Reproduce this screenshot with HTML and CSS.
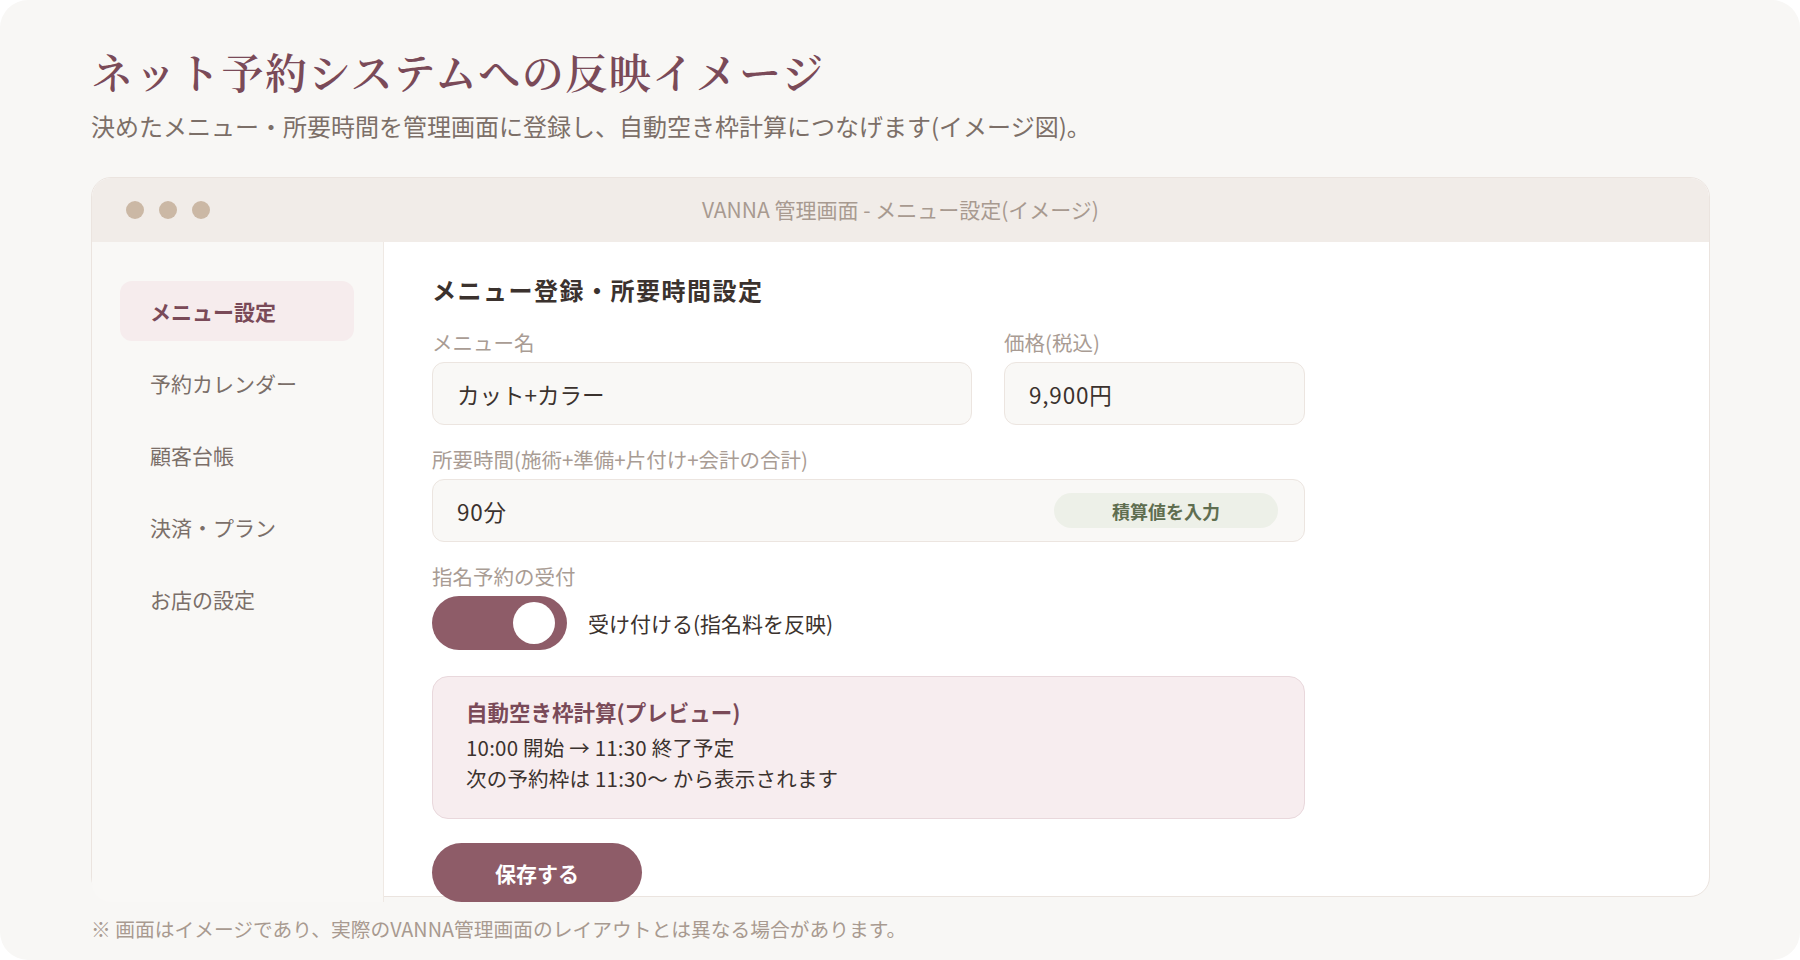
FILE: index.html
```html
<!DOCTYPE html>
<html lang="ja">
<head>
    <meta charset="UTF-8">
    <meta name="viewport" content="width=device-width, initial-scale=1.0">
    <title>ネット予約システムへの反映イメージ</title>
    <link rel="stylesheet" href="styles.css">
</head>
<body>
    <div class="page">
        <header class="intro">
            <h1>ネット予約システムへの反映イメージ</h1>
            <p>決めたメニュー・所要時間を管理画面に登録し、自動空き枠計算につなげます(イメージ図)。</p>
        </header>

        <div class="window">
            <div class="window-bar">
                <div class="dots">
                    <span></span><span></span><span></span>
                </div>
                <div class="window-title">VANNA 管理画面 - メニュー設定(イメージ)</div>
            </div>
            <div class="window-body">
                <nav class="sidebar">
                    <a class="nav-item active">メニュー設定</a>
                    <a class="nav-item">予約カレンダー</a>
                    <a class="nav-item">顧客台帳</a>
                    <a class="nav-item">決済・プラン</a>
                    <a class="nav-item">お店の設定</a>
                </nav>
                <main class="content">
                    <h2>メニュー登録・所要時間設定</h2>
                    <div class="form">
                        <div class="row">
                            <div class="field">
                                <label>メニュー名</label>
                                <div class="input">カット+カラー</div>
                            </div>
                            <div class="field">
                                <label>価格(税込)</label>
                                <div class="input num">9,900円</div>
                            </div>
                        </div>
                        <div class="field">
                            <label>所要時間(施術+準備+片付け+会計の合計)</label>
                            <div class="input with-action">
                                <span class="num">90分</span>
                                <button class="pill">積算値を入力</button>
                            </div>
                        </div>
                        <div class="field">
                            <label>指名予約の受付</label>
                            <div class="toggle-row">
                                <span class="toggle"><span class="knob"></span></span>
                                <span class="toggle-text">受け付ける(指名料を反映)</span>
                            </div>
                        </div>
                    </div>

                    <div class="preview">
                        <h3>自動空き枠計算(プレビュー)</h3>
                        <p>10:00 開始 → 11:30 終了予定</p>
                        <p>次の予約枠は 11:30〜 から表示されます</p>
                    </div>

                    <button class="save">保存する</button>
                </main>
            </div>
        </div>

        <p class="note">※ 画面はイメージであり、実際のVANNA管理画面のレイアウトとは異なる場合があります。</p>
    </div>
</body>
</html>
```

FILE: styles.css
```css
/* Global */
body {
    margin: 0;
    background: #ffffff;
    font-family: "Noto Sans CJK JP", "Noto Sans", sans-serif;
    color: #3b322e;
}

.page {
    box-sizing: border-box;
    height: 960px;
    padding: 43px 90px 0 91px;
    background: #f8f7f5;
    border-radius: 28px;
}

/* Intro */
.intro h1 {
    margin: 0;
    font-family: "Noto Serif CJK JP", "Noto Sans CJK JP", serif;
    font-size: 42px;
    font-weight: 600;
    line-height: 56px;
    letter-spacing: 1.5px;
    color: #7a4a58;
}

.intro p {
    margin: 10px 0 0;
    font-size: 24px;
    line-height: 34px;
    color: #7c6f68;
}

/* Window */
.window {
    box-sizing: border-box;
    height: 720px;
    margin-top: 34px;
    display: flex;
    flex-direction: column;
    background: #ffffff;
    border: 1px solid #ebe4df;
    border-radius: 20px;
}

.window-bar {
    position: relative;
    height: 64px;
    display: flex;
    align-items: center;
    padding: 0 0 0 34px;
    background: #f1ece8;
    border-radius: 19px 19px 0 0;
}

.dots {
    display: flex;
    gap: 15px;
}

.dots span {
    width: 18px;
    height: 18px;
    border-radius: 50%;
    background: #cbb8a5;
}

.window-title {
    position: absolute;
    left: 0;
    right: 0;
    top: 17px;
    text-align: center;
    font-size: 21px;
    line-height: 28px;
    color: #a89a90;
}

.window-body {
    flex: 1;
    min-height: 0;
    display: grid;
    grid-template-columns: 292px 1fr;
}

/* Sidebar */
.sidebar {
    display: flex;
    flex-direction: column;
    gap: 12px;
    padding: 39px 29px 0 28px;
    background: #f9f8f6;
    border-right: 1px solid #efe9e4;
    border-radius: 0 0 0 19px;
}

.nav-item {
    height: 60px;
    display: flex;
    align-items: center;
    padding-left: 30px;
    border-radius: 12px;
    font-size: 21px;
    color: #7b6f69;
}

.nav-item.active {
    background: #f6eced;
    color: #7a4a58;
    font-weight: 700;
}

/* Content */
.content {
    padding: 30px 48px 0;
}

.content h2 {
    margin: 0;
    font-size: 24px;
    font-weight: 700;
    line-height: 35px;
    letter-spacing: 1.5px;
}

.form {
    width: 873px;
    margin-top: 21px;
    display: flex;
    flex-direction: column;
    gap: 20px;
}

.row {
    display: grid;
    grid-template-columns: 1fr 301px;
    gap: 32px;
}

.field {
    display: flex;
    flex-direction: column;
    gap: 6px;
}

.field label {
    font-size: 20.5px;
    line-height: 28px;
    color: #a99c94;
}

.input {
    box-sizing: border-box;
    height: 63px;
    display: flex;
    align-items: center;
    padding: 0 24px;
    background: #f9f8f6;
    border: 1px solid #ece5e0;
    border-radius: 12px;
    font-size: 22.5px;
    color: #3b322e;
}

.num {
    letter-spacing: 0.8px;
}

.with-action {
    justify-content: space-between;
    padding-right: 26px;
}

.pill {
    width: 224px;
    height: 35px;
    border: none;
    border-radius: 18px;
    background: #edf0e8;
    color: #5f6e50;
    font-family: inherit;
    font-size: 18px;
    font-weight: 700;
}

.toggle-row {
    display: flex;
    align-items: center;
    gap: 21px;
}

.toggle {
    position: relative;
    width: 135px;
    height: 54px;
    border-radius: 27px;
    background: #8e5c68;
}

.knob {
    position: absolute;
    top: 6px;
    right: 12px;
    width: 42px;
    height: 42px;
    border-radius: 50%;
    background: #ffffff;
}

.toggle-text {
    font-size: 21px;
    color: #3b322e;
}

/* Preview */
.preview {
    box-sizing: border-box;
    width: 873px;
    margin-top: 26px;
    padding: 19px 33px 24px;
    background: #f7edef;
    border: 1px solid #e9d8dc;
    border-radius: 16px;
}

.preview h3 {
    margin: 0 0 4px;
    font-size: 21.5px;
    font-weight: 700;
    line-height: 32px;
    color: #7a4a58;
}

.preview p {
    margin: 0;
    font-size: 20.5px;
    line-height: 31px;
    letter-spacing: 0.2px;
    color: #3b322e;
}

.save {
    display: block;
    width: 210px;
    height: 59px;
    margin-top: 24px;
    border: none;
    border-radius: 30px;
    background: #8e5c68;
    color: #ffffff;
    font-family: inherit;
    font-size: 21px;
    font-weight: 700;
    position: relative;
}

/* Footer note */
.note {
    margin: 17px 0 0;
    font-size: 19.75px;
    line-height: 30px;
    color: #a89a90;
}
```
